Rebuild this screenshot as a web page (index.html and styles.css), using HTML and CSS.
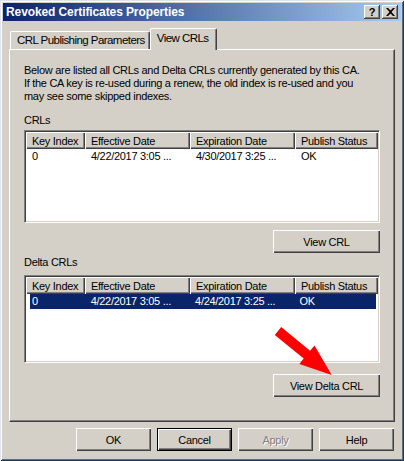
FILE: index.html
```html
<!DOCTYPE html>
<html>
<head>
<meta charset="utf-8">
<link rel="stylesheet" href="styles.css">
</head>
<body>
<div class="window">
  <div class="titlebar">
    <span class="title">Revoked Certificates Properties</span>
    <div class="tbtns">
      <span class="tbtn help">?</span>
      <span class="tbtn close">
        <svg width="9" height="8" viewBox="0 0 9 8"><path d="M0 0h2l2.5 2.5L7 0h2L5.5 4 9 8H7L4.5 5.5 2 8H0l3.5-4z" fill="#000"/></svg>
      </span>
    </div>
  </div>
  <div class="content">
    <div class="tabs">
      <div class="tab">CRL Publishing Parameters</div>
      <div class="tab active">View CRLs</div>
    </div>
    <div class="panel">
      <p class="desc">Below are listed all CRLs and Delta CRLs currently generated by this CA.<br>If the CA key is re-used during a renew, the old index is re-used and you<br>may see some skipped indexes.</p>
      <div class="label l1">CRLs</div>
      <div class="list crl">
        <div class="hdr">
          <div class="hc c1">Key Index</div>
          <div class="hc c2">Effective Date</div>
          <div class="hc c3">Expiration Date</div>
          <div class="hc c4">Publish Status</div>
        </div>
        <div class="row">
          <div class="rc c1">0</div>
          <div class="rc c2">4/22/2017 3:05 ...</div>
          <div class="rc c3">4/30/2017 3:25 ...</div>
          <div class="rc c4">OK</div>
        </div>
      </div>
      <div class="btnrow b1"><button class="btn wide">View CRL</button></div>
      <div class="label l2">Delta CRLs</div>
      <div class="list delta">
        <div class="hdr">
          <div class="hc c1">Key Index</div>
          <div class="hc c2">Effective Date</div>
          <div class="hc c3">Expiration Date</div>
          <div class="hc c4">Publish Status</div>
        </div>
        <div class="row sel">
          <div class="rc c1">0</div>
          <div class="rc c2">4/22/2017 3:05 ...</div>
          <div class="rc c3">4/24/2017 3:25 ...</div>
          <div class="rc c4">OK</div>
        </div>
      </div>
      <div class="btnrow b2"><button class="btn wide">View Delta CRL</button></div>
    </div>
    <div class="footer">
      <button class="btn">OK</button>
      <button class="btn default">Cancel</button>
      <button class="btn disabled">Apply</button>
      <button class="btn">Help</button>
    </div>
  </div>
  <svg class="arrow" width="404" height="461" viewBox="0 0 404 461">
    <polygon points="274.8,334.9 281.2,327.1 310.1,350.8 314.5,345.4 331.7,375 299.3,364 303.7,358.6" fill="#f00"/>
  </svg>
</div>
</body>
</html>
```

FILE: styles.css
```css
html, body {
  margin: 0;
  padding: 0;
  background: #d4d0c8;
}
body {
  font-family: "Liberation Sans", Arial, sans-serif;
  font-size: 11px;
  letter-spacing: -0.3px;
  color: #000;
}
.window {
  position: relative;
  width: 404px;
  height: 461px;
  box-sizing: border-box;
  padding: 3px;
  background: #d4d0c8;
  box-shadow: inset 1px 1px #dde4ec, inset -1px -1px #1c3a5c, inset 2px 2px #fff, inset -2px -2px #5a6e86;
  overflow: hidden;
}
.titlebar {
  height: 18px;
  display: flex;
  align-items: center;
  justify-content: space-between;
  background: linear-gradient(to right, #0a246a, #a6caf0);
  padding: 0 3px 0 3px;
}
.title {
  color: #fff;
  font-weight: bold;
  font-size: 12px;
  letter-spacing: -0.1px;
}
.tbtns {
  display: flex;
  gap: 2px;
}
.tbtn {
  width: 16px;
  height: 14px;
  box-sizing: border-box;
  background: #d4d0c8;
  box-shadow: inset -1px -1px #404040, inset 1px 1px #fff, inset -2px -2px #808080;
  display: flex;
  align-items: center;
  justify-content: center;
  font-weight: bold;
  font-size: 11px;
  letter-spacing: 0;
  line-height: 1;
}
.help {
  padding-top: 1px;
}
.content {
  padding: 0 6px 0 6px;
}
.tabs {
  display: flex;
  align-items: flex-end;
  height: 21px;
  margin-top: 7px;
  padding-left: 1px;
  position: relative;
  z-index: 1;
}
.tab {
  height: 18px;
  box-sizing: border-box;
  padding: 0 4px 0 6px;
  line-height: 17px;
  border-top: 1px solid #fff;
  border-left: 1px solid #fff;
  border-right: 1px solid #404040;
  box-shadow: inset -1px 0 #808080;
  border-radius: 2px 2px 0 0;
  font-size: 11.5px;
  letter-spacing: -0.55px;
}
.tab.active {
  height: 22px;
  margin-bottom: -1px;
  background: #d4d0c8;
  line-height: 19px;
  padding: 0 8px 0 6px;
}
.panel {
  height: 373px;
  box-sizing: border-box;
  border: 1px solid;
  border-color: #fff #404040 #404040 #fff;
  box-shadow: inset -1px -1px #808080;
  padding: 14px 14px 0 14px;
}
.desc {
  margin: 0;
  line-height: 13px;
  font-size: 11px;
}
.label {
  line-height: 13px;
}
.l1 {
  margin-top: 11px;
}
.l2 {
  margin-top: 3px;
}
.list {
  margin-top: 3px;
  background: #fff;
  box-sizing: border-box;
  border: 1px solid;
  border-color: #808080 #fff #fff #808080;
  box-shadow: inset 1px 1px #404040, inset -1px -1px #d4d0c8;
  padding: 1px;
}
.crl {
  height: 93px;
}
.delta {
  margin-top: 6px;
  height: 88px;
}
.hdr {
  display: flex;
  height: 17px;
}
.hc {
  box-sizing: border-box;
  background: #d4d0c8;
  box-shadow: inset 1px 1px #fff, inset -1px -1px #404040, inset -2px -2px #808080;
  padding: 2px 0 0 6px;
  line-height: 14px;
  white-space: nowrap;
  overflow: hidden;
}
.c1 { width: 59px; }
.c2 { width: 105px; }
.c3 { width: 105px; }
.c4 { width: 83px; }
.row {
  display: flex;
  height: 15px;
  line-height: 15px;
}
.rc {
  box-sizing: border-box;
  padding-left: 6px;
  white-space: nowrap;
}
.rc.c1 {
  padding-left: 4px;
  margin-left: 2px;
  width: 57px;
}
.row.sel {
  background: #0a246a;
  color: #fff;
  margin-left: 4px;
  margin-right: 2px;
}
.row.sel .rc.c1 {
  margin-left: 0;
  padding-left: 2px;
  width: 55px;
}
.btnrow {
  display: flex;
  justify-content: flex-end;
}
.b1 {
  margin-top: 7px;
}
.b2 {
  margin-top: 11px;
}
.btn {
  font-family: "Liberation Sans", Arial, sans-serif;
  font-size: 11px;
  letter-spacing: -0.3px;
  color: #000;
  height: 23px;
  width: 75px;
  box-sizing: border-box;
  border: none;
  background: #d4d0c8;
  box-shadow: inset 1px 1px #fff, inset -1px -1px #404040, inset -2px -2px #808080;
  padding: 0;
  margin: 0;
}
.btn.wide {
  width: 107px;
}
.btn.default {
  box-shadow: inset 0 0 0 1px #000, inset 2px 2px #fff, inset -2px -2px #404040, inset -3px -3px #808080;
}
.btn.disabled {
  color: #808080;
  text-shadow: 1px 1px #fff;
}
.footer {
  display: flex;
  justify-content: flex-end;
  gap: 6px;
  margin-top: 6px;
  padding-right: 1px;
}
.arrow {
  position: absolute;
  left: 0;
  top: 0;
  pointer-events: none;
}
```
